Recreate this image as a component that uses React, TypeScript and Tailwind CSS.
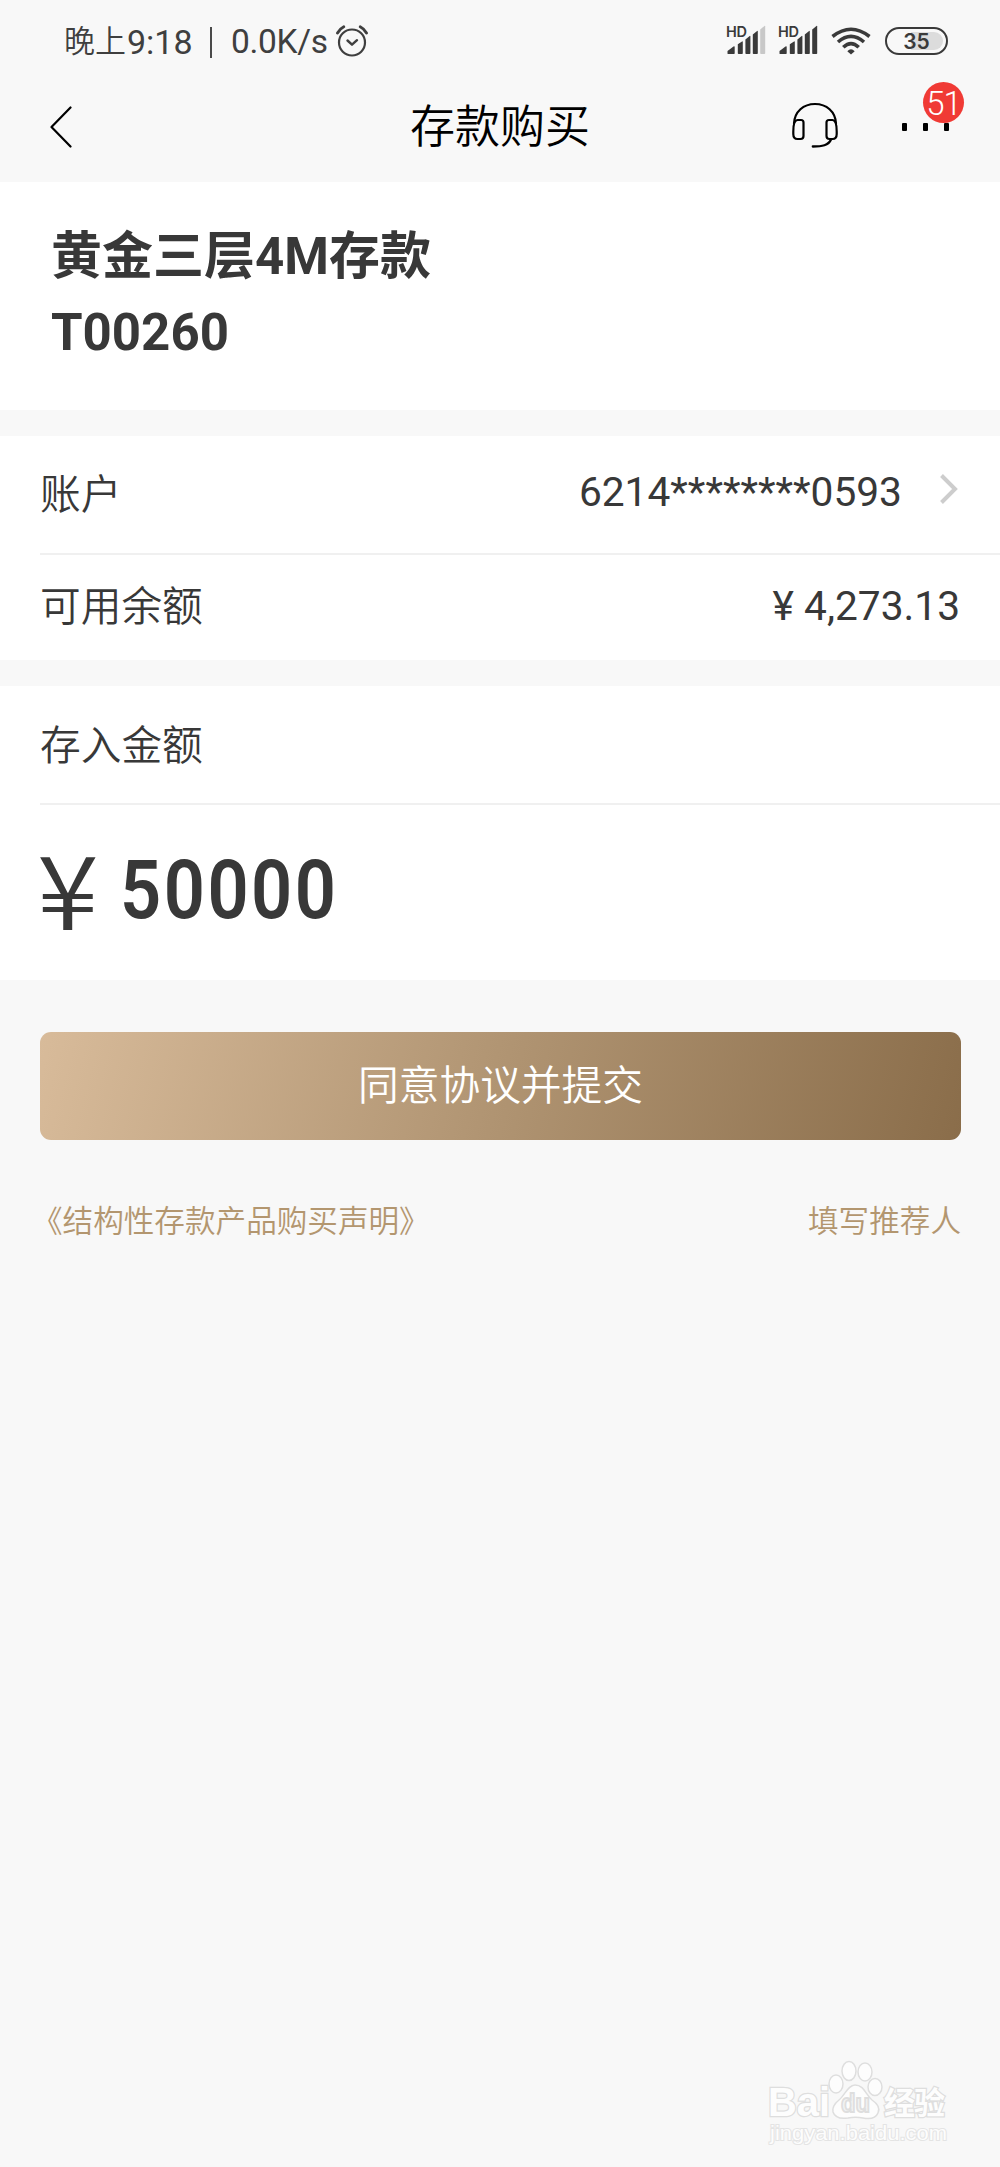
import React, { ReactNode } from "react";

const SANS = "font-['Roboto','Noto_Sans_CJK_SC',sans-serif]";

function AlarmIcon() {
    return (
        <svg className="w-8 h-8" viewBox="0 0 32 32" fill="none" stroke="#3f3f3f" strokeLinecap="round" strokeLinejoin="round">
            <circle cx="16" cy="17.5" r="13" strokeWidth="2.2" />
            <path d="M11.5 15.5l4.5 4.2 5-4.5" strokeWidth="2.4" />
            <path d="M1.5 8Q3.5 4 7.8 1.8M24.2 1.8Q28.5 4 30.5 8" strokeWidth="2.8" />
        </svg>
    );
}

function SignalIcon({ lastBar }: { lastBar: string }) {
    return (
        <svg className="w-10 h-[34px]" viewBox="0 -4 40 34">
            <text x="0" y="11.5" fontFamily="Inter, sans-serif" fontSize="14.5" fontWeight="600" fill="#3a3a3a" textLength="21">
                HD
            </text>
            <path d="M1.5 28.5v-2.5l6-4.5q1.2-.5 1.2.6v6.2q0 .7-.7.7h-5.5q-1 0-1-.5z" fill="#3a3a3a" />
            <path d="M11.8 19.3l4.6-3q.4 0 .4.8v11.2q0 .7-.8.7h-3.4q-.8 0-.8-.7zM19.4 14.5l4.6-3.8q.4 0 .4.8v16.8q0 .7-.8.7h-3.4q-.8 0-.8-.7zM26.8 9.5l4.6-3.8q.4 0 .4.8v21.8q0 .7-.8.7h-3.4q-.8 0-.8-.7z" fill="#3a3a3a" />
            <path d="M34.2 4.5l4.6-3.8q.4 0 .4.8v26.8q0 .7-.8.7h-3.4q-.8 0-.8-.7z" fill={lastBar} />
        </svg>
    );
}

function WifiIcon() {
    return (
        <svg className="w-10 h-7" viewBox="0 0 40 28" fill="none" stroke="#3a3a3a" strokeWidth="3.6">
            <path d="M1.5 9.5Q20-5 38.5 9.5" />
            <path d="M7 15Q20 3.8 33 15" />
            <path d="M12.3 20.3Q20 13 27.7 20.3" />
            <path d="M16.3 24.2Q20 20.5 23.7 24.2L20 27.6z" fill="#3a3a3a" stroke="none" />
        </svg>
    );
}

function HeadsetIcon() {
    return (
        <svg className="w-[46px] h-[46px]" viewBox="0 0 46 46" fill="none" stroke="#000" strokeWidth="2.2" strokeLinecap="round">
            <path d="M2 21.5C2.6 9.5 11.5 2 23 2s20.4 7.5 21 19.5" />
            <path d="M1.3 29.5C1.3 25 1.4 18 5.5 18H9q2.5 0 2.5 2.5V34Q11.5 37 8.5 37H5.5Q1.3 37 1.3 32z" />
            <path d="M44.7 29.5C44.7 25 44.6 18 40.5 18H37q-2.5 0-2.5 2.5V34Q34.5 37 37.5 37H40.5Q44.7 37 44.7 32z" />
            <path d="M39 37.5C36.5 43.5 30 44.5 20.8 44.5" strokeWidth="2.3" />
        </svg>
    );
}

function StatusBar() {
    return (
        <div className="h-[82px] flex items-start justify-between pl-16 pr-[52px] text-[#3f3f3f]">
            <div className="flex h-[84px] items-center">
                <span className="text-[31px] font-[350] w-[63px]">晚上</span>
                <span className="text-[34px] w-[70px]">9:18</span>
                <span className="w-0.5 h-[31px] bg-[#4a4a4a] ml-[13px]" />
                <span className="text-[33.5px] w-[98px] ml-[19px] tracking-[-0.3px]">0.0K/s</span>
                <span className="ml-[7px] -mt-0.5"><AlarmIcon /></span>
            </div>
            <div className="flex pt-[25px]">
                <span className="-mt-1"><SignalIcon lastBar="#c8c8c8" /></span>
                <span className="ml-3 -mt-1"><SignalIcon lastBar="#3a3a3a" /></span>
                <span className="ml-[13px] pt-0.5"><WifiIcon /></span>
                <div className="ml-[14px] mt-0.5 w-[63px] h-7 rounded-full border-2 border-[#3a3a3a] p-[3px] flex">
                    <div className="flex-1 rounded-full bg-[linear-gradient(90deg,transparent_40%,#dcdcdc_40%)] flex items-center justify-center font-['Inter',sans-serif] font-semibold text-[21px] leading-none text-[#3a3a3a]">
                        35
                    </div>
                </div>
            </div>
        </div>
    );
}

function NavBar() {
    return (
        <div className="h-[100px] grid grid-cols-3 items-start text-black">
            <svg className="w-[22px] h-[42px] ml-[50px] mt-[24px]" viewBox="0 0 22 42" fill="none" stroke="#000" strokeWidth="2.2" strokeLinecap="round" strokeLinejoin="round">
                <path d="M20.5 1.5L1.5 21l19 19.5" />
            </svg>
            <h1 className="text-[45px] leading-[92px] text-center font-[350]">存款购买</h1>
            <div className="flex justify-end pr-[51px]">
                <span className="mt-[20px] mr-[64px]"><HeadsetIcon /></span>
                <div className="relative flex justify-between w-[47px] h-2 mt-[41px]">
                    <span className="w-[5px] h-2 rounded-[1px] bg-black" />
                    <span className="w-[5px] h-2 rounded-[1px] bg-black" />
                    <span className="w-[5px] h-2 rounded-[1px] bg-black" />
                    <span className="absolute left-[21px] -top-[41px] size-[41px] rounded-full bg-[#f03a35] text-white text-[33px] font-light leading-[43px] text-center tracking-[-1px]">
                        51
                    </span>
                </div>
            </div>
        </div>
    );
}

function Row({ label, children }: { label: string; children?: ReactNode }) {
    return (
        <div className="flex items-start justify-between pr-10">
            <span className="text-[40.7px] leading-[62px] font-[350]">{label}</span>
            {children}
        </div>
    );
}

function Watermark() {
    return (
        <svg className="w-[190px] h-[92px]" viewBox="0 0 190 92" fill="#fdfdfd" stroke="#dedede" strokeWidth="1.5">
            <g fontFamily="Liberation Sans, sans-serif" fontWeight="bold">
                <text x="5" y="57" fontSize="41" textLength="62" lengthAdjust="spacingAndGlyphs" strokeWidth="2.5" paintOrder="stroke">Bai</text>
                <ellipse cx="73" cy="25" rx="7" ry="9" />
                <ellipse cx="86" cy="12" rx="7" ry="9.5" />
                <ellipse cx="102" cy="13" rx="7" ry="9" />
                <ellipse cx="112" cy="28" rx="7" ry="8.5" />
                <path d="M92 26c9 0 11 10 17 15 6 4 8 9 6 13-3 7-10 6-15 5-5-1-10-1-15 0-7 1-13 0-15-6-1-5 1-8 6-12 6-5 9-15 16-15z" />
                <text x="78" y="53" fontSize="25" textLength="29" lengthAdjust="spacingAndGlyphs" fill="#f3f3f3" strokeWidth="1.8">du</text>
            </g>
            <text x="121" y="55" fontFamily="Noto Sans CJK SC, sans-serif" fontWeight="bold" fontSize="31" textLength="61" strokeWidth="2.5" paintOrder="stroke">经验</text>
            <text x="7" y="81" fontFamily="Liberation Sans, sans-serif" fontSize="21" textLength="177" lengthAdjust="spacingAndGlyphs" strokeWidth="2" stroke="#e4e4e4" paintOrder="stroke">jingyan.baidu.com</text>
        </svg>
    );
}

export default function App() {
    return (
        <div className={`${SANS} w-[1000px] h-[2167px] flex flex-col bg-[#f8f8f8] text-[#383838] overflow-hidden whitespace-nowrap`}>
            <StatusBar />
            <NavBar />

            {/* Product name */}
            <section className="h-[228px] bg-white pl-[51px] pt-[37px] text-[51px] leading-[76px] font-bold">
                <div>黄金三层4M存款</div>
                <div>T00260</div>
            </section>

            {/* Account and balance */}
            <section className="mt-[26px] h-[224px] bg-white pl-10">
                <div className="h-[119px] pt-[28px] border-b-2 border-[#f0f0f0]">
                    <Row label="账户">
                        <div className="flex items-center">
                            <span className="text-[40.7px] leading-[56px]">6214********0593</span>
                            <svg className="w-[18px] h-[30px] ml-[38px] mr-[2px] -mt-1.5" viewBox="0 0 18 30" fill="none" stroke="#cdcdcd" strokeWidth="4">
                                <path d="M1.5 1.5L15 15 1.5 28.5" />
                            </svg>
                        </div>
                    </Row>
                </div>
                <div className="pt-[21px]">
                    <Row label="可用余额">
                        <span className="text-[40.7px] leading-[60px]">¥ 4,273.13</span>
                    </Row>
                </div>
            </section>

            {/* Amount */}
            <section className="mt-[26px] h-[294px] bg-white pl-10">
                <div className="h-[119px] pt-[29px] border-b-2 border-[#f0f0f0]">
                    <Row label="存入金额" />
                </div>
                <div className="flex h-[175px] items-start">
                    <span className="w-[80px] -ml-[3px] mr-[3px] text-[102px] leading-[120px] pt-[21px] origin-left scale-x-[1.1] font-[350] font-['Noto_Sans_CJK_SC',sans-serif]">¥</span>
                    <span className="text-[82px] leading-[120px] pt-[25px] font-semibold tracking-[2.8px] origin-left scale-x-[0.88]">50000</span>
                </div>
            </section>

            <button className="mt-[52px] mx-10 w-[921px] h-[108px] shrink-0 rounded-[11px] bg-[linear-gradient(105deg,#d8bb9a,#b09472_50%,#8a6d4a)] text-white text-[40.7px] font-[350] leading-[108px]">
                同意协议并提交
            </button>

            <div className="mt-[57px] pl-[32px] pr-[39px] flex justify-between text-[30.6px] leading-[50px] font-[350] text-[#b3966f]">
                <a>《结构性存款产品购买声明》</a>
                <a>填写推荐人</a>
            </div>

            <footer className="mt-auto flex justify-end pr-[47px] pb-[16px]">
                <Watermark />
            </footer>
        </div>
    );
}
